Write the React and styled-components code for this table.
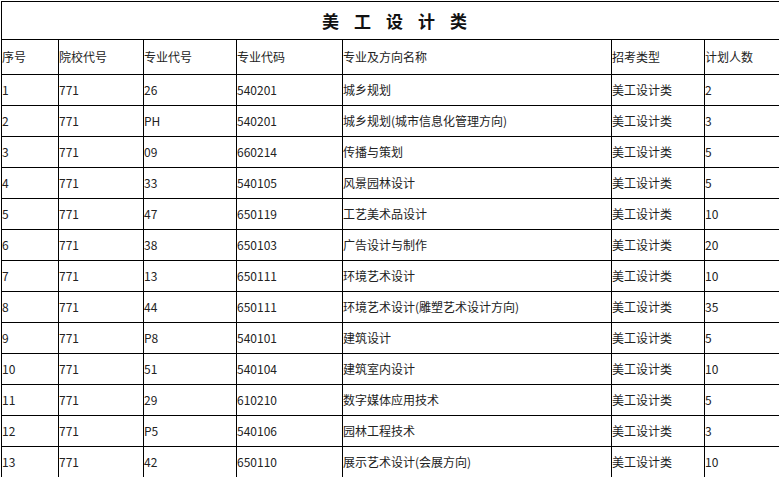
import React from "react";
import styled, { createGlobalStyle } from "styled-components";

const Global = createGlobalStyle`
  html, body { margin: 0; padding: 0; background: #fff; overflow: hidden; }
  body { font-family: "Noto Sans CJK SC", "Noto Sans", sans-serif; }
`;

const Page = styled.div`
  padding: 1px 0 0 1px;
  width: 778px;
  overflow: hidden;
`;

const Table = styled.table`
  border-collapse: collapse;
  table-layout: fixed;
  width: 801px;
  border: 1px solid #000;
`;

const TitleCell = styled.td`
  height: 37px;
  padding: 0;
  border: 1px solid #000;
  text-align: center;
  vertical-align: middle;
  font-family: "Noto Sans CJK SC", sans-serif;
  font-weight: 700;
  font-size: 17px;
  letter-spacing: 15px;
  color: #111;
`;

const Cell = styled.td`
  height: ${(p) => (p.$head ? "34px" : "30px")};
  padding: 0;
  border: 1px solid #000;
  vertical-align: middle;
  font-size: 12px;
  line-height: 16px;
  color: #222;
  white-space: nowrap;
  overflow: hidden;
`;

const widths = [57, 85, 93, 106, 269, 93, 98];
const headers = ["序号", "院校代号", "专业代号", "专业代码", "专业及方向名称", "招考类型", "计划人数"];
const rows = [
  ["1", "771", "26", "540201", "城乡规划", "美工设计类", "2"],
  ["2", "771", "PH", "540201", "城乡规划(城市信息化管理方向)", "美工设计类", "3"],
  ["3", "771", "09", "660214", "传播与策划", "美工设计类", "5"],
  ["4", "771", "33", "540105", "风景园林设计", "美工设计类", "5"],
  ["5", "771", "47", "650119", "工艺美术品设计", "美工设计类", "10"],
  ["6", "771", "38", "650103", "广告设计与制作", "美工设计类", "20"],
  ["7", "771", "13", "650111", "环境艺术设计", "美工设计类", "10"],
  ["8", "771", "44", "650111", "环境艺术设计(雕塑艺术设计方向)", "美工设计类", "35"],
  ["9", "771", "P8", "540101", "建筑设计", "美工设计类", "5"],
  ["10", "771", "51", "540104", "建筑室内设计", "美工设计类", "10"],
  ["11", "771", "29", "610210", "数字媒体应用技术", "美工设计类", "5"],
  ["12", "771", "P5", "540106", "园林工程技术", "美工设计类", "3"],
  ["13", "771", "42", "650110", "展示艺术设计(会展方向)", "美工设计类", "10"],
];

export default function App() {
  return (
    <>
      <Global />
      <Page>
        <Table>
          <colgroup>
            {widths.map((w, i) => (
              <col key={i} style={{ width: w }} />
            ))}
          </colgroup>
          <tbody>
            <tr>
              <TitleCell colSpan={7}>美工设计类</TitleCell>
            </tr>
            <tr>
              {headers.map((h) => (
                <Cell key={h} $head>{h}</Cell>
              ))}
            </tr>
            {rows.map((r) => (
              <tr key={r[0]}>
                {r.map((c, i) => (
                  <Cell key={i}>{c}</Cell>
                ))}
              </tr>
            ))}
          </tbody>
        </Table>
      </Page>
    </>
  );
}
